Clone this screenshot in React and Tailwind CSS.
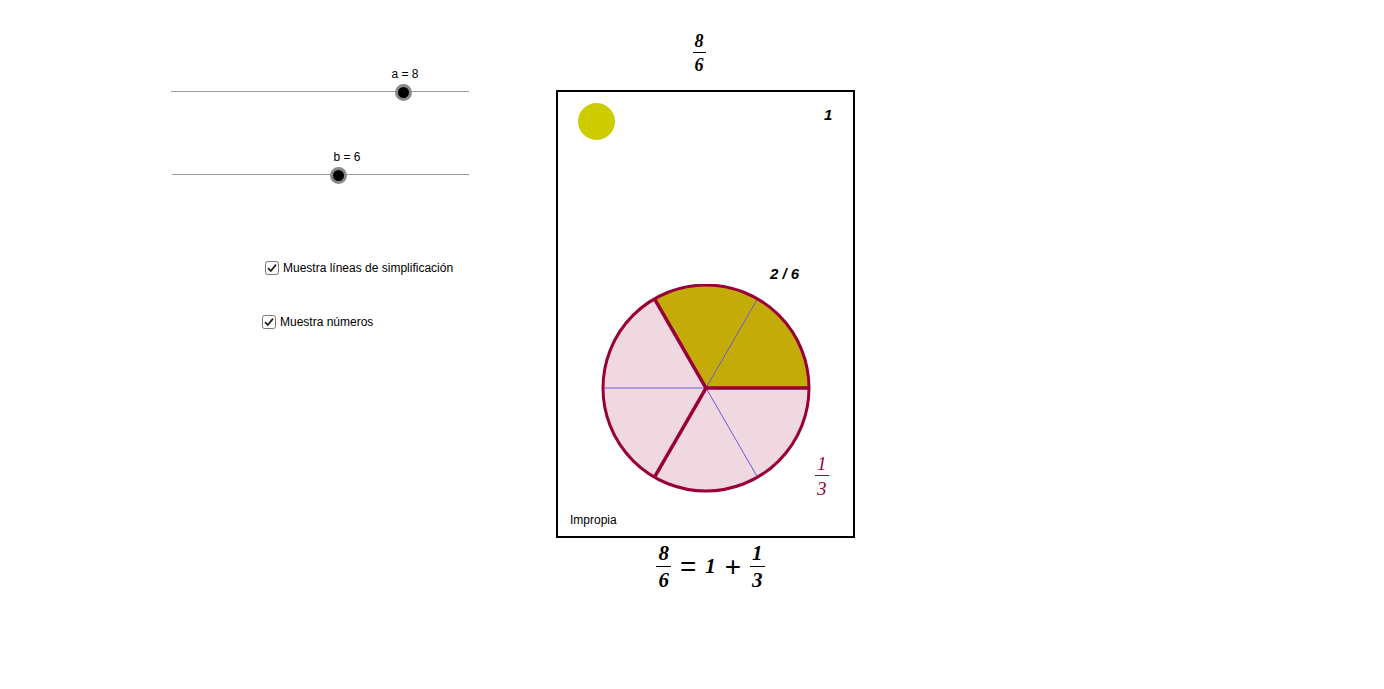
import React from 'react';

const serif = { fontFamily: '"Liberation Serif", "Times New Roman", serif' };
const sans = { fontFamily: '"Liberation Sans", Arial, sans-serif' };

const Frac = ({ num, den, className = '', bar = 'border-black' }) => (
    <span className={`inline-flex flex-col items-center leading-none ${className}`}>
        <span className="px-[2px] pb-[2px]">{num}</span>
        <span className={`self-stretch border-t ${bar}`} />
        <span className="px-[2px] pt-[3px]">{den}</span>
    </span>
);

// slider of the geogebra canvas: knob and label sit on the line
const Slider = ({ label, left, width, top, knob, labelAt }) => (
    <div className="absolute" style={{ left, top, width }}>
        <div className="relative h-[20px]">
            <div className="absolute left-0 right-0 top-[9px] h-px bg-[#999999]" />
            <div
                className="absolute top-[2px] w-[17px] h-[17px] rounded-full bg-black border-[3px] border-[#8a8a8a]"
                style={{ left: knob - 8 }}
            />
            <div
                className="absolute -top-[17px] text-[12px] text-black whitespace-nowrap -translate-x-1/2"
                style={{ ...sans, left: labelAt }}
            >
                {label}
            </div>
        </div>
    </div>
);

const Check = ({ label, left, top }) => (
    <label className="absolute flex items-center gap-[4px] text-[12px] text-black" style={{ ...sans, left, top }}>
        <svg width="14" height="14" viewBox="0 0 14 14">
            <rect x="0.5" y="0.5" width="13" height="13" rx="2" fill="white" stroke="#777" />
            <path d="M3 7.2 L5.8 10 L11 3.6" fill="none" stroke="#222" strokeWidth="1.8" />
        </svg>
        <span>{label}</span>
    </label>
);

const Pie = () => {
    const cx = 104, cy = 104, r = 103;
    const pt = (deg) => {
        const a = (deg * Math.PI) / 180;
        return [cx + r * Math.cos(a), cy - r * Math.sin(a)];
    };
    const [x0, y0] = pt(0);
    const [x1, y1] = pt(120);
    return (
        <svg width="210" height="210" viewBox="-1 0 210 210">
            <circle cx={cx} cy={cy} r={r} fill="#f0d8e0" />
            <path d={`M${cx} ${cy} L${x0} ${y0} A${r} ${r} 0 0 0 ${x1} ${y1} Z`} fill="#c4ac08" />
            {[60, 180, 300].map(d => {
                const [x, y] = pt(d);
                return <line key={d} x1={cx} y1={cy} x2={x} y2={y} stroke="#6a5ad8" strokeWidth="1" />;
            })}
            {[0, 120, 240].map(d => {
                const [x, y] = pt(d);
                return <line key={d} x1={cx} y1={cy} x2={x} y2={y} stroke="#99003a" strokeWidth="3.5" />;
            })}
            <circle cx={cx} cy={cy} r={r} fill="none" stroke="#99003a" strokeWidth="3" />
        </svg>
    );
};

export default function App() {
    return (
        <div className="relative w-[1384px] h-[689px] bg-white overflow-hidden">
            <Slider label="a = 8" left={171} width={298} top={82} knob={232} labelAt={234} />
            <Slider label="b = 6" left={172} width={297} top={165} knob={166} labelAt={175} />

            <Check label="Muestra líneas de simplificación" left={265} top={259} />
            <Check label="Muestra números" left={262} top={313} />

            <div className="absolute left-[556px] top-[28px] w-[299px] flex flex-col items-center">
                <div className="mr-[13px] mb-[16px] text-[18px] font-bold italic text-black" style={serif}>
                    <Frac num="8" den="6" />
                </div>

                <div className="relative w-[299px] h-[448px] border-2 border-black">
                    <div className="absolute left-[20px] top-[11px] w-[37px] h-[37px] rounded-full bg-[#cccc00]" />
                    <div className="absolute left-[266px] top-[12px] text-[15px] font-bold italic" style={sans}>1</div>
                    <div className="absolute left-[212px] top-[171px] text-[15px] font-bold italic" style={sans}>2 / 6</div>
                    <div className="absolute left-[43px] top-[192px]">
                        <Pie />
                    </div>
                    <div className="absolute left-[257px] top-[358px] text-[19px] italic text-[#99003a]" style={serif}>
                        <Frac num="1" den="3" bar="border-[#99003a]" />
                    </div>
                    <div className="absolute left-[12px] top-[419px] text-[12px]" style={sans}>Impropia</div>
                </div>

                <div className="ml-[10px] mt-[5px] flex items-center gap-[9px] text-[21px] font-bold italic text-black" style={serif}>
                    <Frac num="8" den="6" />
                    <span className="not-italic font-normal text-[28px]" style={sans}>=</span>
                    <span>1</span>
                    <span className="not-italic font-normal text-[28px]" style={sans}>+</span>
                    <Frac num="1" den="3" />
                </div>
            </div>
        </div>
    );
}
